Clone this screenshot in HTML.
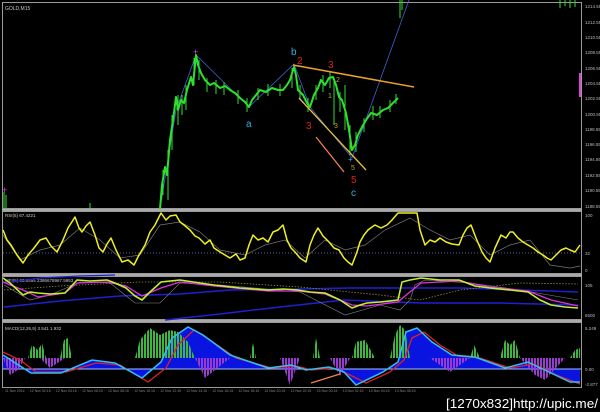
<!DOCTYPE html>
<html><head><meta charset="utf-8"><style>
html,body{margin:0;padding:0;background:#000;width:600px;height:412px;overflow:hidden}
svg{display:block}
text{font-family:"Liberation Sans",sans-serif}
</style></head><body>
<svg width="600" height="412" viewBox="0 0 600 412" xmlns="http://www.w3.org/2000/svg">
<defs>
<pattern id="gs" width="3" height="4" patternUnits="userSpaceOnUse"><rect width="2" height="4" fill="#3cb83c"/></pattern>
<pattern id="ps" width="3" height="4" patternUnits="userSpaceOnUse"><rect width="2" height="4" fill="#9a3ad0"/></pattern>
</defs>
<rect width="600" height="412" fill="#000"/>
<g fill="none" stroke="#9a9a9a">
<rect x="2.5" y="2.5" width="579" height="206" stroke-width="1"/>
<rect x="2.5" y="211.5" width="579" height="62" stroke-width="1"/>
<rect x="2.5" y="276.5" width="579" height="43" stroke-width="1"/>
<rect x="2.5" y="322.5" width="579" height="65" stroke-width="1"/>
</g>
<line x1="2" y1="210" x2="582" y2="210" stroke="#aaa" stroke-width="2"/>
<line x1="2" y1="275" x2="582" y2="275" stroke="#aaa" stroke-width="2"/>
<line x1="2" y1="321" x2="582" y2="321" stroke="#aaa" stroke-width="2"/>
<text x="5" y="10" fill="#ccc" font-size="5">GOLD,M15</text>
<g fill="#bbb" font-size="4.5">
<text x="585" y="8">1214.55</text><text x="585" y="24">1212.55</text><text x="585" y="39">1210.55</text>
<text x="585" y="54">1208.55</text><text x="585" y="70">1206.55</text><text x="585" y="85">1204.55</text>
<text x="585" y="100">1202.55</text><text x="585" y="116">1200.55</text><text x="585" y="131">1198.55</text>
<text x="585" y="146">1196.55</text><text x="585" y="161">1194.55</text><text x="585" y="177">1192.55</text>
<text x="585" y="192">1190.55</text><text x="585" y="208">1188.55</text>
<text x="585" y="217">100</text><text x="585" y="255">32</text><text x="585" y="272">0</text>
<text x="585" y="287">105</text><text x="585" y="317">6500</text>
<text x="585" y="330">5.249</text><text x="585" y="371">0.00</text><text x="585" y="386">-2.877</text>
</g>
<rect x="579" y="73" width="2" height="24" fill="#e040e0"/>
<polyline fill="none" stroke="#4060d0" stroke-width="0.8" points="160,209 176,110 196,55 249,107 294,64 310,107 352,158 409,0"/>
<polyline fill="none" stroke="#2ee02e" stroke-width="2" stroke-linejoin="round" points="160,209 162,185 165,167 167,175 170,140 173,120 176,97 178,110 181,100 184,103 187,90 191,77 193,85 196,55 198,65 201,73 205,80 210,85 214,83 220,88 225,86 230,90 235,93 240,98 245,102 249,107 252,100 256,95 260,90 266,92 272,88 278,90 283,90 287,85 290,80 294,67 296,75 298,90 303,95 307,103 310,107 314,95 318,88 321,80 325,85 329,78 333,77 336,85 339,97 342,100 346,113 349,130 352,150 355,145 358,135 362,127 366,120 371,113 377,115 383,110 388,108 393,103 398,98"/>
<g stroke="#2ee02e" stroke-width="1">
<line x1="334" y1="80" x2="334" y2="125"/><line x1="345" y1="85" x2="345" y2="130"/><line x1="168" y1="150" x2="168" y2="200"/><line x1="178" y1="95" x2="178" y2="125"/>
<line x1="163" y1="170" x2="163" y2="195"/><line x1="172" y1="115" x2="172" y2="150"/><line x1="182" y1="95" x2="182" y2="115"/><line x1="186" y1="85" x2="186" y2="110"/>
<line x1="194" y1="58" x2="194" y2="85"/><line x1="199" y1="60" x2="199" y2="80"/><line x1="207" y1="78" x2="207" y2="92"/><line x1="216" y1="80" x2="216" y2="94"/>
<line x1="224" y1="82" x2="224" y2="95"/><line x1="238" y1="90" x2="238" y2="104"/><line x1="247" y1="98" x2="247" y2="112"/><line x1="258" y1="88" x2="258" y2="100"/>
<line x1="268" y1="84" x2="268" y2="96"/><line x1="280" y1="84" x2="280" y2="96"/><line x1="292" y1="68" x2="292" y2="88"/><line x1="300" y1="85" x2="300" y2="100"/>
<line x1="308" y1="98" x2="308" y2="112"/><line x1="316" y1="85" x2="316" y2="100"/><line x1="323" y1="75" x2="323" y2="92"/><line x1="330" y1="72" x2="330" y2="88"/>
<line x1="340" y1="92" x2="340" y2="112"/><line x1="350" y1="125" x2="350" y2="155"/><line x1="356" y1="132" x2="356" y2="152"/><line x1="364" y1="118" x2="364" y2="132"/>
<line x1="373" y1="106" x2="373" y2="120"/><line x1="380" y1="106" x2="380" y2="118"/><line x1="390" y1="100" x2="390" y2="112"/><line x1="396" y1="94" x2="396" y2="104"/>
<line x1="400" y1="0" x2="400" y2="18"/><line x1="402" y1="0" x2="402" y2="10"/>
<line x1="560" y1="0" x2="560" y2="8"/><line x1="565" y1="0" x2="565" y2="6"/><line x1="570" y1="0" x2="570" y2="8"/><line x1="575" y1="0" x2="575" y2="7"/>
<line x1="4" y1="192" x2="4" y2="209"/><line x1="6" y1="195" x2="6" y2="209"/><line x1="90" y1="203" x2="90" y2="209"/>
</g>
<text x="193" y="55" fill="#e040e0" font-size="9">+</text>
<text x="2" y="193" fill="#e040e0" font-size="9">+</text>
<line x1="293" y1="65" x2="414" y2="87" stroke="#e8a030" stroke-width="1.5"/>
<line x1="299" y1="98" x2="366" y2="170" stroke="#e8c040" stroke-width="1.3"/>
<line x1="316" y1="137" x2="344" y2="172" stroke="#f08050" stroke-width="1.3"/>
<g font-size="10">
<text x="246" y="127" fill="#30b0e0">a</text>
<text x="291" y="55" fill="#30b0e0">b</text>
<text x="351" y="196" fill="#30b0e0">c</text>
<text x="297" y="64" fill="#e02020">2</text>
<text x="328" y="68" fill="#e02020">3</text>
<text x="306" y="129" fill="#e02020">3</text>
<text x="351" y="183" fill="#e02020">5</text>
</g>
<g font-size="7" fill="#c0a030">
<text x="336" y="82">2</text><text x="328" y="98">1</text><text x="334" y="128">3</text><text x="351" y="170">5</text>
</g>
<text x="348" y="162" fill="#30b0e0" font-size="8">+</text>
<text x="5" y="217" fill="#ccc" font-size="4.5">RSI(5) 67.4221</text>
<line x1="3" y1="253" x2="581" y2="253" stroke="#5060a0" stroke-dasharray="1,2"/>
<polyline fill="none" stroke="#777" stroke-width="0.7" points="3,235 20,260 40,250 60,245 80,228 100,240 120,258 140,255 160,225 180,222 200,232 220,250 245,255 265,245 285,240 305,258 325,240 345,250 365,245 385,230 410,218 430,230 450,240 470,235 490,255 510,245 530,240 550,265 570,268 580,266"/>
<polyline fill="none" stroke="#f0f020" stroke-width="1.5" stroke-linejoin="round" points="3,230 7,240 11,245 17,255 23,263 28,255 34,248 40,240 46,238 51,246 57,252 63,240 68,228 75,217 79,228 82,232 86,226 90,222 95,235 99,248 103,252 107,244 111,238 116,250 122,262 128,260 134,265 139,255 145,245 150,232 155,225 161,213 166,220 170,216 176,215 180,222 184,225 190,230 195,236 199,238 205,244 210,240 214,248 220,252 225,255 230,258 236,254 240,260 245,258 249,245 253,235 258,240 263,238 268,242 273,232 278,230 283,225 287,240 291,248 295,252 300,258 306,262 310,245 314,235 318,228 323,236 329,242 334,248 339,250 344,258 348,262 352,265 357,252 360,242 364,235 368,230 372,227 375,225 381,228 387,225 392,220 398,213 405,213 412,213 417,213 420,230 425,245 430,240 435,242 440,238 446,242 452,244 459,245 463,235 467,228 471,225 476,238 482,252 486,258 490,262 495,248 501,235 506,238 510,232 513,232 518,238 523,242 528,245 533,248 538,252 543,255 547,258 551,260 556,255 561,250 566,248 570,250 575,252 580,245"/>
<text x="5" y="282" fill="#ccc" font-size="4.5">MFI(5) 93.8455 2386678967.5953</text>
<polyline fill="none" stroke="#2020d0" stroke-width="1.5" points="4,307 60,301 120,296 180,294 230,290 300,289 350,288 402,288 460,288 520,290 578,292"/>
<polyline fill="none" stroke="#2020d0" stroke-width="1.5" points="165,320 220,314 280,307 344,300 421,303 500,303 578,305"/>
<polyline fill="none" stroke="#2020d0" stroke-width="1.2" points="4,283 40,278 80,276 115,275"/>
<polyline fill="none" stroke="#8a8a40" stroke-width="0.8" stroke-dasharray="1.5,1.5" points="4,290 60,286 140,282 220,282 300,287 380,295 420,300 460,290 520,283 578,284"/>
<polyline fill="none" stroke="#888" stroke-width="0.6" points="4,285 30,300 50,295 80,282 110,283 135,303 160,303 180,283 220,285 300,292 345,315 380,305 400,310 410,300 415,285 425,280 470,283 520,290 578,300"/>
<polyline fill="none" stroke="#e030e0" stroke-width="1.3" points="3,282 23,290 38,297 65,293 77,283 107,282 126,286 142,296 161,288 180,282 214,286 268,291 298,291 325,294 352,305 367,306 398,302 405,296 421,283 459,281 490,287 528,291 551,300 578,306"/>
<polyline fill="none" stroke="#c0f030" stroke-width="1.6" stroke-linejoin="round" points="3,278 10,283 23,295 30,292 38,293 50,294 65,293 77,280 90,281 107,280 115,283 126,288 135,296 142,300 150,292 161,282 170,281 180,280 200,283 214,285 240,288 268,290 283,289 298,290 310,292 325,293 340,300 352,308 360,305 367,303 380,302 398,300 402,282 410,280 421,278 440,280 459,280 475,286 490,288 510,290 528,292 540,300 551,305 565,307 578,308"/>
<text x="5" y="330" fill="#ccc" font-size="4.5">MACD(12,26,9) 3.541 1.932</text>
<polygon fill="#0a14e0" points="3,369 3,355 31,373 61,373 92,360 115,363 142,378 161,362 172,338 188,327 203,335 230,355 268,368 291,365 306,370 329,367 344,372 356,385 383,372 398,362 406,332 417,328 432,342 452,355 475,357 505,368 528,362 551,373 570,382 580,382 580,369"/>
<line x1="3" y1="369" x2="581" y2="369" stroke="#a0c0ff" stroke-width="1"/>
<g fill="url(#gs)">
<polygon points="28,358 32,345 38,350 42,343 46,358"/>
<polygon points="60,358 64,340 68,338 72,358"/>
<polygon points="135,358 140,340 150,328 160,335 170,330 178,332 188,342 195,358"/>
<polygon points="250,358 253,343 256,358"/>
<polygon points="313,358 316,338 320,358"/>
<polygon points="352,358 356,342 365,340 375,358"/>
<polygon points="390,358 395,335 400,325 405,330 410,358"/>
<polygon points="470,358 474,345 480,358"/>
<polygon points="500,358 505,340 510,345 515,340 520,358"/>
<polygon points="570,358 575,350 580,348 580,358"/>
</g>
<g fill="url(#ps)">
<polygon points="3,358 10,375 18,370 25,358"/>
<polygon points="40,358 50,368 65,358"/>
<polygon points="195,358 205,378 215,370 230,358"/>
<polygon points="280,358 290,385 300,358"/>
<polygon points="330,358 340,376 350,358"/>
<polygon points="430,358 450,372 470,358"/>
<polygon points="520,358 535,375 545,380 565,358"/>
</g>
<polyline fill="none" stroke="#e02020" stroke-width="1.3" points="3,352 20,360 36,372 66,372 96,363 120,365 148,382 166,368 178,345 194,330 210,340 236,358 272,368 296,366 312,370 334,368 350,375 366,383 390,372 404,360 412,338 424,332 440,345 458,356 480,358 510,368 534,364 556,375 580,384"/>
<polyline fill="none" stroke="#30c0f0" stroke-width="1.5" points="3,355 31,373 61,373 92,360 115,363 142,378 161,362 172,338 188,327 203,335 230,355 268,368 291,365 306,370 329,367 344,372 356,385 383,372 398,362 406,332 417,328 432,342 452,355 475,357 505,368 528,362 551,373 570,382 580,382"/>
<line x1="311" y1="383" x2="340" y2="374" stroke="#f08050" stroke-width="1.3"/>
<g fill="#888" font-size="3.5">
<text x="5" y="392">11 Nov 2014 · · 12 Nov 02:15 · · 12 Nov 04:15 · · 12 Nov 06:15 · · 12 Nov 08:15 · · 12 Nov 10:15 · · 12 Nov 12:15 · · 12 Nov 14:15 · · 12 Nov 16:15 · · 12 Nov 18:15 · · 12 Nov 20:15 · · 12 Nov 22:15 · · 13 Nov 00:15 · · 13 Nov 02:15 · · 13 Nov 04:15 · · 13 Nov 06:15</text>
</g>
<text x="446" y="408" fill="#fff" font-size="13" font-family="Liberation Mono,monospace" textLength="152" lengthAdjust="spacingAndGlyphs">[1270x832]http://upic.me/</text>
</svg>
</body></html>
